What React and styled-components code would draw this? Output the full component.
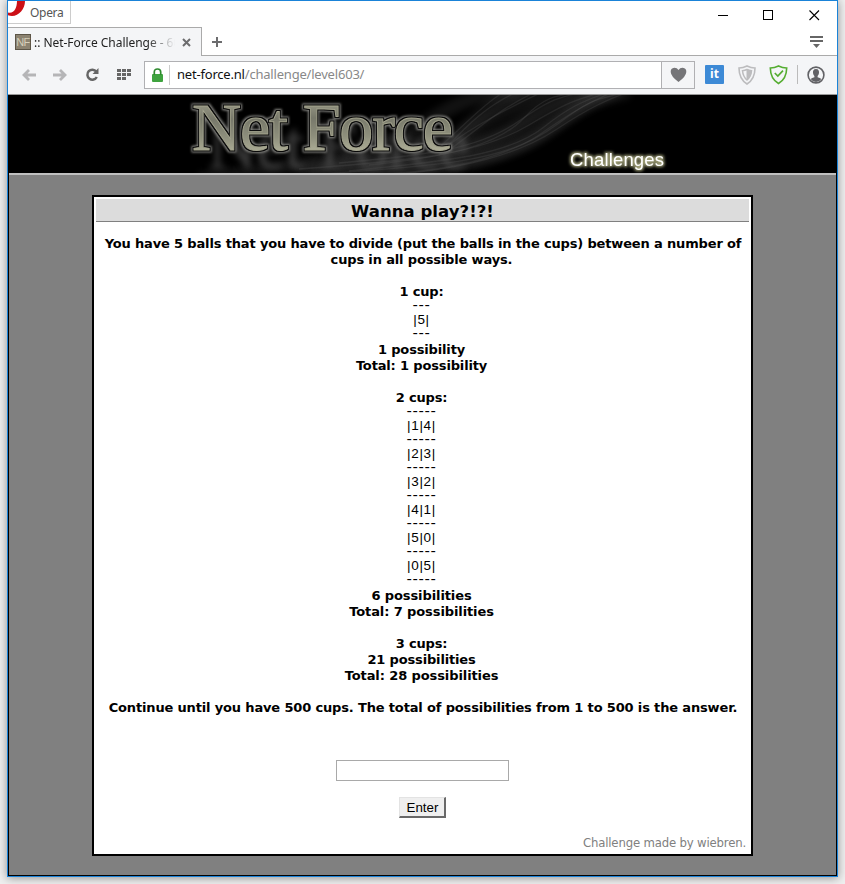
import React from "react";
import styled, { createGlobalStyle } from "styled-components";

const Global = createGlobalStyle`
  * { box-sizing: border-box; }
  body { margin: 0; background: #efefef; overflow: hidden; }
`;

const Desktop = styled.div`
  height: 884px;
  padding: 0 7px;
  background: #efefef;
`;
const Window = styled.div`
  width: 831px;
  height: 877px;
  border: 1px solid #1a83d8;
  background: #fff;
  box-shadow: 0 1px 9px rgba(0, 0, 0, 0.4);
  display: flex;
  flex-direction: column;
  font-family: "Noto Sans", "Open Sans", sans-serif;
`;
const TitleBar = styled.div`
  height: 26px;
  display: flex;
  justify-content: space-between;
`;
const OperaButton = styled.div`
  width: 63px;
  height: 23px;
  border: solid #ccc;
  border-width: 0 1px 1px 0;
  display: flex;
  font-size: 12px;
  line-height: 23px;
  color: #555;
  letter-spacing: -0.3px;
  svg { margin-right: 5px; }
`;
const WindowControls = styled.div`
  display: flex;
  gap: 35px;
  padding: 9px 17px 0 0;
  svg { width: 11px; height: 11px; }
`;
const TabStrip = styled.div`
  height: 29px;
  display: flex;
`;
const Tab = styled.div`
  width: 194px;
  height: 29px;
  background: #f4f5f7;
  border: solid #aaa;
  border-width: 1px 1px 0 0;
  display: flex;
  align-items: center;
  padding-left: 7px;
`;
const Favicon = styled.div`
  width: 16px;
  height: 16px;
  border: 1px solid #5c5547;
  background: #8c8371;
  color: #d6cfba;
  font: 11px/14px "Liberation Sans", sans-serif;
  letter-spacing: -0.6px;
  text-align: center;
`;
const TabTitle = styled.div`
  width: 141px;
  margin: 2px 7px 0 3px;
  white-space: nowrap;
  overflow: hidden;
  font-size: 12px;
  line-height: 18px;
  letter-spacing: ${(p) => p.$spacing};
  color: #222;
  mask-image: linear-gradient(90deg, #000 80%, transparent 100%);
`;
const TabSpacer = styled.div`
  flex: 1;
  border-bottom: 1px solid #aaa;
  display: flex;
  justify-content: space-between;
  padding: 9px 14px 0 10px;
`;
const Toolbar = styled.div`
  height: 39px;
  background: #f4f5f7;
  border-bottom: 1px solid #999;
  display: flex;
  align-items: center;
  padding: 0 11px 1px 14px;
  flex: none;
`;
const NavIcons = styled.div`
  display: grid;
  grid-template-columns: 31px 32px 32px 27px;
  align-items: center;
`;
const AddressBar = styled.div`
  width: 551px;
  height: 28px;
  border: 1px solid #b0b0b3;
  background: #fff;
  display: flex;
  align-items: center;
`;
const Lock = styled.div`
  width: 25px;
  height: 20px;
  padding: 0 0 0 7px;
  border-right: 1px solid #ccc;
`;
const Url = styled.div`
  flex: 1;
  padding: 0 0 1px 7px;
  font-size: 13px;
  line-height: 24px;
  letter-spacing: ${(p) => p.$spacing};
  color: #888;
  span { color: #111; }
`;
const HeartCell = styled.div`
  width: 33px;
  height: 26px;
  border-left: 1px solid #b0b0b3;
  background: #f4f5f7;
  display: grid;
  place-items: center;
`;
const Extensions = styled.div`
  flex: 1;
  display: grid;
  grid-template-columns: 33px 31px 28px 10px 18px;
  align-items: center;
  padding-left: 10px;
`;
const ItBadge = styled.div`
  width: 19px;
  height: 19px;
  border-radius: 1px;
  background: #3d8ad6;
  color: #fff;
  font: bold 12px/18px "Open Sans", sans-serif;
  text-align: center;
`;
const Divider = styled.div`
  width: 1px;
  height: 19px;
  background: #bbb;
`;
const Page = styled.div`
  flex: 1;
  min-height: 0;
  border: solid #000;
  border-width: 0 1px 1px;
  background: #808080;
`;
const Banner = styled.div`
  height: 80px;
  background: #000;
  border-bottom: 2px solid #c0c0c0;
  svg { display: block; }
`;
const Card = styled.main`
  width: 661px;
  height: 661px;
  margin: 20px 0 0 83px;
  border: 2px solid #000;
  background: #fff;
  padding: 2px;
  font-family: "DejaVu Sans", Verdana, sans-serif;
  color: #000;
  display: flex;
  flex-direction: column;
  align-items: center;
`;
const Heading = styled.h1`
  width: 100%;
  height: 23px;
  margin: 0 0 14px;
  background: #dcdcdc;
  border-bottom: 1px solid #808080;
  font-size: 16.5px;
  line-height: 25px;
  letter-spacing: ${(p) => p.$spacing};
  text-align: center;
`;
const Line = styled.div`
  height: 16px;
  width: 100%;
  padding-left: ${(p) => (p.$wide ? "1px" : "0")};
  padding-right: ${(p) => (p.$wide ? "0" : "2px")};
  text-align: center;
  font-size: 13px;
  font-weight: bold;
  line-height: 16px;
  white-space: nowrap;
  letter-spacing: ${(p) => p.$spacing || "-0.155px"};
`;
const Cups = styled.div`
  width: 100%;
  padding-right: 2px;
  display: flex;
  flex-direction: column;
  align-items: center;
`;
const Dashes = styled.div`
  height: 14px;
  margin-right: 3px;
  font: 14px/12px "Liberation Mono", monospace;
  letter-spacing: -2.4px;
`;
const Balls = styled.div`
  height: 14px;
  font: 13.5px/11px "Liberation Sans Narrow", "Liberation Sans", sans-serif;
  letter-spacing: ${(p) => p.$spacing || "0.7px"};
`;
const Answer = styled.input`
  width: 173px;
  height: 21px;
  margin-top: 44px;
  border: 1px solid #a9a9a9;
  background: #fff;
`;
const Enter = styled.button`
  width: 47px;
  height: 21px;
  margin: 16px 0 0 0;
  padding: 0 0 0 1px;
  border: solid;
  border-width: 1px 2px 2px 1px;
  border-color: #e3e3e3 #696969 #696969 #e3e3e3;
  background: #efefef;
  font: 13.33px/17px "Liberation Sans", sans-serif;
  color: #000;
`;
const Credit = styled.div`
  align-self: flex-end;
  margin: 17px 3px 0 0;
  font-family: "DejaVu Sans Condensed", "DejaVu Sans", sans-serif;
  font-size: 13px;
  line-height: 16px;
  letter-spacing: ${(p) => p.$spacing};
  color: #808080;
`;

const Arrow = ({ flip }) => (
  <svg width="14" height="12" viewBox="0 0 14 12" fill="none" stroke="#b5b5b7" strokeWidth="2.8">
    <path d={flip ? "M0 6H12M7 1L12 6L7 11" : "M14 6H2M7 1L2 6L7 11"} />
  </svg>
);

const wisps = [
  "M190 84C300 70 370 60 420 26S490 2 520 -6",
  "M290 74C400 66 470 60 520 30S570 6 600 -6",
  "M330 68C420 60 470 54 510 26S550 5 590 -8",
  "M440 50C460 34 500 12 540 -6",
  "M350 80C450 78 510 58 550 28S590 6 620 -4",
  "M430 60C450 40 470 14 510 -4",
  "M300 80C410 72 490 68 530 40S580 8 610 -6",
];

const strands = [
  ...wisps.slice(1),
  "M340 76C440 66 500 60 535 32S585 4 606 -6",
  "M380 80C460 74 515 56 548 34S600 4 622 -4",
  "M360 70C440 62 490 50 516 22S560 2 580 -6",
  "M436 58C470 34 486 16 530 -5",
  "M428 54C450 36 474 8 500 -6",
];

const BannerArt = () => (
  <svg width="827" height="78" viewBox="0 0 827 78">
    <defs>
      <linearGradient id="metal" x1="0" y1="0" x2="0.04" y2="1">
        <stop offset="0" stopColor="#b3b39c" />
        <stop offset="0.4" stopColor="#77786a" />
        <stop offset="0.65" stopColor="#8f907d" />
        <stop offset="1" stopColor="#c6c6ac" />
      </linearGradient>
      <filter id="soft" x="-20%" y="-40%" width="140%" height="180%">
        <feGaussianBlur stdDeviation="3.6" />
      </filter>
      <filter id="fine" x="-20%" y="-40%" width="140%" height="180%">
        <feGaussianBlur stdDeviation="0.7" />
      </filter>
      <filter id="engraved" x="-10%" y="-20%" width="130%" height="180%" colorInterpolationFilters="sRGB">
        <feOffset in="SourceAlpha" dx="16" dy="18" result="moved" />
        <feGaussianBlur in="moved" stdDeviation="3.2" result="ghost" />
        <feFlood floodColor="#505050" floodOpacity="0.7" />
        <feComposite in2="ghost" operator="in" result="reflection" />
        <feMorphology in="SourceAlpha" operator="dilate" radius="2" result="wide" />
        <feGaussianBlur in="wide" stdDeviation="1" result="wideSoft" />
        <feFlood floodColor="#83837f" />
        <feComposite in2="wideSoft" operator="in" result="halo" />
        <feMorphology in="SourceAlpha" operator="dilate" radius="1" result="edge" />
        <feGaussianBlur in="edge" stdDeviation="0.5" result="edgeSoft" />
        <feFlood floodColor="#080808" />
        <feComposite in2="edgeSoft" operator="in" result="outline" />
        <feMerge>
          <feMergeNode in="reflection" />
          <feMergeNode in="halo" />
          <feMergeNode in="outline" />
          <feMergeNode in="SourceGraphic" />
        </feMerge>
      </filter>
      <filter id="glow" x="-20%" y="-60%" width="140%" height="220%" colorInterpolationFilters="sRGB">
        <feMorphology in="SourceAlpha" operator="dilate" radius="1.2" result="wide" />
        <feGaussianBlur in="wide" stdDeviation="1.4" result="wideSoft" />
        <feFlood floodColor="#a5a57c" />
        <feComposite in2="wideSoft" operator="in" result="halo" />
        <feMerge>
          <feMergeNode in="halo" />
          <feMergeNode in="SourceGraphic" />
        </feMerge>
      </filter>
    </defs>
    <g fill="none" stroke="#6a6a6a">
      {wisps.map((d) => (
        <path key={d} d={d} strokeWidth="14" opacity="0.17" filter="url(#soft)" />
      ))}
      {strands.map((d) => (
        <path key={d} d={d} strokeWidth="1.3" opacity="0.2" filter="url(#fine)" />
      ))}
    </g>
    <text x="183" y="55" textLength="261" fontFamily="Liberation Serif, serif" fontSize="68" fill="url(#metal)" stroke="#a4a48e" strokeWidth="0.9" filter="url(#engraved)">Net Force</text>
    <text x="561" y="71" textLength="94" fontFamily="Liberation Sans, sans-serif" fontSize="18.5" fill="#fff" filter="url(#glow)">Challenges</text>
  </svg>
);

const twoCups = ["|1|4|", "|2|3|", "|3|2|", "|4|1|", "|5|0|", "|0|5|"];

export default function App() {
  return (
    <Desktop>
      <Global />
      <Window>
        <TitleBar>
          <OperaButton>
            <svg width="17" height="15" viewBox="0 0 17 15">
              <path d="M9 0H17C17 8 11 15 4 15Q2 15 0 14.2V11.5C6 13 9 7 9 0Z" fill="#cc0f16" />
            </svg>
            Opera
          </OperaButton>
          <WindowControls>
            <svg viewBox="0 0 11 11"><path d="M1 5.5H11" stroke="#000" /></svg>
            <svg viewBox="0 0 11 11"><rect x="0.5" y="0.5" width="9" height="9" fill="none" stroke="#000" /></svg>
            <svg viewBox="0 0 11 11"><path d="M0.5 0.5L10 10M10 0.5L0.5 10" stroke="#000" strokeWidth="1.1" /></svg>
          </WindowControls>
        </TitleBar>
        <TabStrip>
          <Tab>
            <Favicon>NF</Favicon>
            <TabTitle $spacing="-0.05px">:: Net-Force Challenge - 603</TabTitle>
            <svg width="9" height="9" viewBox="0 0 9 9">
              <path d="M1 1L8 8M8 1L1 8" stroke="#6c6c6e" strokeWidth="2" />
            </svg>
          </Tab>
          <TabSpacer>
            <svg width="11" height="11" viewBox="0 0 11 11"><path d="M5 1V11M0 6H10" stroke="#6c6c6e" strokeWidth="2" /></svg>
            <svg width="13" height="12" viewBox="0 0 13 12"><path d="M0 0H13V2H0ZM0 4H13V6H0ZM3 8H10L6.5 12Z" fill="#666" /></svg>
          </TabSpacer>
        </TabStrip>
        <Toolbar>
          <NavIcons>
            <Arrow />
            <Arrow flip />
            <svg width="15" height="14" viewBox="0 0 15 14">
              <path d="M11.3 3.5A5 5 0 1 0 11.8 9" fill="none" stroke="#666" strokeWidth="2.5" />
              <path d="M13.5 0V6H7.5Z" fill="#666" />
            </svg>
            <svg width="15" height="11" viewBox="0 0 15 11" fill="#666">
              {[0, 4, 8].map((y) => [0, 5, 10].map((x) => (
                (x < 10 || y < 8) && <rect key={`${x}-${y}`} x={x} y={y} width="4" height="3" />
              )))}
            </svg>
          </NavIcons>
          <AddressBar>
            <Lock>
              <svg width="11" height="14" viewBox="0 0 11 14">
                <rect y="6" width="11" height="8" rx="1" fill="#3fa33f" />
                <path d="M2.3 7V4Q2.3 1 5.5 1T8.7 4V7" fill="none" stroke="#2f8a2f" strokeWidth="1.7" />
              </svg>
            </Lock>
            <Url $spacing="-0.2px"><span>net-force.nl</span>/challenge/level603/</Url>
            <HeartCell>
              <svg width="17" height="15" viewBox="0 0 17 15">
                <path d="M8.5 15Q1 9.5 0.7 5Q0.5 1 4.3 0.7Q7 0.6 8.5 3Q10 0.6 12.7 0.7Q16.5 1 16.3 5Q16 9.5 8.5 15Z" fill="#757578" />
              </svg>
            </HeartCell>
          </AddressBar>
          <Extensions>
            <ItBadge>it</ItBadge>
            <svg width="18" height="20" viewBox="0 0 18 20" fill="none" stroke="#bcbcbe">
              <path d="M9 1Q13 3 17 3Q17 14 9 19Q1 14 1 3Q5 3 9 1Z" strokeWidth="1.6" />
              <path d="M9 4.5Q11 5.5 13.5 5.7Q13 11.5 9 15Q5 11.5 4.5 5.7Q7 5.5 9 4.5Z" strokeWidth="1.5" />
              <path d="M9 5V15Q13 11.5 13.3 6Z" fill="#bcbcbe" />
            </svg>
            <svg width="19" height="20" viewBox="0 0 18 20" fill="none" stroke="#55ad31">
              <path d="M9 1Q13 3 17.2 3Q17 14 9 18.5Q1 14 0.8 3Q5 3 9 1Z" strokeWidth="1.6" />
              <path d="M5.3 8L8.3 11L13.5 5.7" strokeWidth="1.7" />
            </svg>
            <Divider />
            <svg width="18" height="18" viewBox="0 0 18 18">
              <circle cx="9" cy="9" r="7.9" fill="none" stroke="#626266" strokeWidth="1.6" />
              <path d="M9 3C6.5 3 5.8 5 6 7Q6.3 9 7.4 10V11.2Q5 12 3.6 13Q5.8 16 9 16T14.4 13Q13 12 10.6 11.2V10Q11.7 9 12 7C12.2 5 11.5 3 9 3Z" fill="#626266" />
            </svg>
          </Extensions>
        </Toolbar>
        <Page>
          <Banner><BannerArt /></Banner>
          <Card>
            <Heading $spacing="0.05px">Wanna play?!?!</Heading>
            <Line $wide>You have 5 balls that you have to divide (put the balls in the cups) between a number of</Line>
            <Line>cups in all possible ways.</Line>
            <Line />
            <Line>1 cup:</Line>
            <Cups>
              <Dashes>---</Dashes>
              <Balls>|5|</Balls>
              <Dashes>---</Dashes>
            </Cups>
            <Line>1 possibility</Line>
            <Line>Total: 1 possibility</Line>
            <Line />
            <Line>2 cups:</Line>
            <Cups>
              <Dashes>-----</Dashes>
              {twoCups.map((row) => (
                <React.Fragment key={row}>
                  <Balls>{row}</Balls>
                  <Dashes>-----</Dashes>
                </React.Fragment>
              ))}
            </Cups>
            <Line $spacing="-0.1px">6 possibilities</Line>
            <Line $spacing="-0.1px">Total: 7 possibilities</Line>
            <Line />
            <Line>3 cups:</Line>
            <Line>21 possibilities</Line>
            <Line $spacing="-0.1px">Total: 28 possibilities</Line>
            <Line />
            <Line $wide>Continue until you have 500 cups. The total of possibilities from 1 to 500 is the answer.</Line>
            <Answer aria-label="Answer" />
            <Enter>Enter</Enter>
            <Credit $spacing="-0.17px">Challenge made by wiebren.</Credit>
          </Card>
        </Page>
      </Window>
    </Desktop>
  );
}
